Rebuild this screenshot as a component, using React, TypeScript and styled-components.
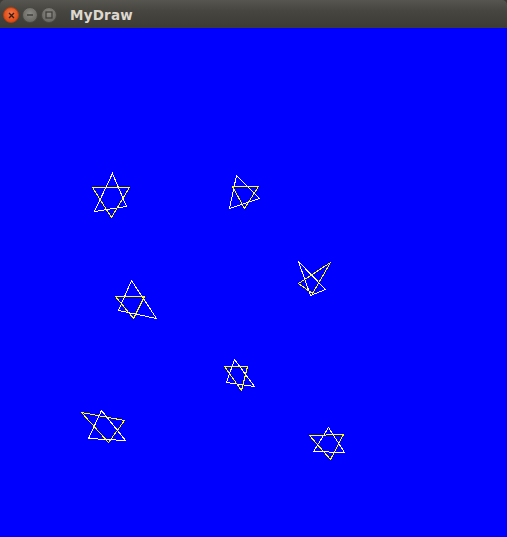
import React from "react";
import styled, { createGlobalStyle } from "styled-components";

const Global = createGlobalStyle`
  html, body {
    margin: 0;
    padding: 0;
    background: #3c3b37;
  }
  #root {
    height: 100vh;
  }
`;

const Window = styled.div`
  display: flex;
  flex-direction: column;
  width: 507px;
  height: 537px;
  overflow: hidden;
`;

const TitleBar = styled.div`
  display: flex;
  align-items: center;
  height: 28px;
  padding: 2px 0 0 3px;
  background: linear-gradient(#57554f, #47453f 40%, #3c3b37);
  border-radius: 5px 5px 0 0;
  box-sizing: border-box;
`;

const Buttons = styled.div`
  display: flex;
  align-items: center;
  gap: 3px;
`;

const WinButton = styled.div<{ $kind: "close" | "min" | "max" }>`
  width: 16px;
  height: 16px;
  border-radius: 50%;
  box-sizing: border-box;
  display: flex;
  align-items: center;
  justify-content: center;
  background: ${(p) =>
    p.$kind === "close"
      ? "radial-gradient(circle at 50% 40%, #f47a4a, #df4b16 70%)"
      : "radial-gradient(circle at 50% 40%, #8c8b85, #6b6a65 70%)"};
  border: 1px solid ${(p) => (p.$kind === "close" ? "#b9400f" : "#4a4944")};
`;

const Title = styled.div`
  margin-left: 13px;
  font-family: "DejaVu Sans", "Noto Sans", sans-serif;
  font-weight: bold;
  font-size: 13.5px;
  color: #dcd8cf;
  letter-spacing: 0.2px;
`;

const Canvas = styled.div`
  flex: 1;
  background: #0000ff;
  position: relative;
`;

const Drawing = styled.svg`
  display: block;
  width: 100%;
  height: 100%;
`;

type Pt = [number, number];
type Star = { a: Pt[]; b: Pt[] };

// coordinates in window pixels (canvas starts at y = 28)
const stars: Star[] = [
  { a: [[112, 173], [126, 206], [94, 211]], b: [[92, 187], [129, 187], [111, 217]] },
  { a: [[236, 175], [259, 198], [229, 208]], b: [[232, 186], [258, 186], [244, 208]] },
  { a: [[298, 261], [325, 289], [310, 295]], b: [[330, 262], [298, 283], [312, 293]] },
  { a: [[131, 280], [156, 318], [118, 310]], b: [[115, 296], [144, 296], [133, 318]] },
  { a: [[234, 359], [254, 386], [226, 382]], b: [[224, 366], [247, 366], [241, 390]] },
  { a: [[101, 410], [125, 440], [88, 438]], b: [[81, 412], [124, 420], [108, 442]] },
  { a: [[328, 427], [344, 452], [313, 451]], b: [[309, 435], [343, 434], [330, 459]] },
];

const pts = (p: Pt[]) => p.map(([x, y]) => `${x + 0.5},${y - 28 + 0.5}`).join(" ");

function CloseGlyph() {
  return (
    <svg width="7" height="7" viewBox="0 0 7 7">
      <path d="M1 1L6 6M6 1L1 6" stroke="#3a1a0c" strokeWidth="1.3" />
    </svg>
  );
}

function MinGlyph() {
  return (
    <svg width="8" height="8" viewBox="0 0 8 8">
      <path d="M1 4H7" stroke="#3c3b37" strokeWidth="1.4" />
    </svg>
  );
}

function MaxGlyph() {
  return (
    <svg width="8" height="8" viewBox="0 0 8 8">
      <rect x="1" y="1" width="6" height="6" fill="none" stroke="#3c3b37" strokeWidth="1.2" />
    </svg>
  );
}

export default function App() {
  return (
    <>
      <Global />
      <Window>
        <TitleBar>
          <Buttons>
            <WinButton $kind="close">
              <CloseGlyph />
            </WinButton>
            <WinButton $kind="min">
              <MinGlyph />
            </WinButton>
            <WinButton $kind="max">
              <MaxGlyph />
            </WinButton>
          </Buttons>
          <Title>MyDraw</Title>
        </TitleBar>
        <Canvas>
          <Drawing viewBox="0 0 507 509" shapeRendering="crispEdges">
            {stars.map((s, i) => (
              <g key={i} fill="none" strokeWidth="1">
                <polygon points={pts(s.a)} stroke="#ffffff" />
                <polygon points={pts(s.b)} stroke="#ffff00" />
              </g>
            ))}
          </Drawing>
        </Canvas>
      </Window>
    </>
  );
}
